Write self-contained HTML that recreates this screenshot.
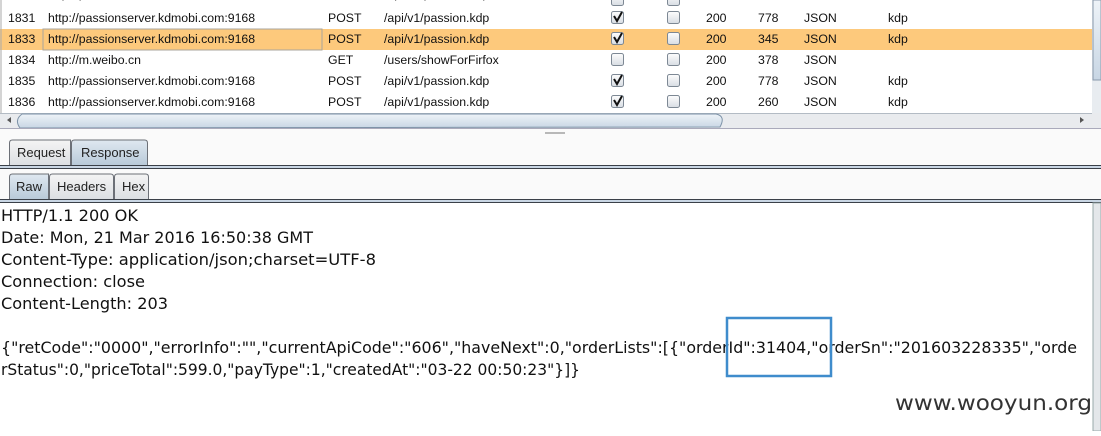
<!DOCTYPE html>
<html><head><meta charset="utf-8"><style>html,body{margin:0;padding:0;background:#fff;overflow:hidden}</style></head>
<body>
<svg width="1101" height="431" viewBox="0 0 1101 431" xmlns="http://www.w3.org/2000/svg" font-family="Liberation Sans, sans-serif">
<defs>
<linearGradient id="cb" x1="0" y1="0" x2="0" y2="1"><stop offset="0" stop-color="#fdfdfd"/><stop offset="1" stop-color="#d8dde3"/></linearGradient>
<linearGradient id="tab" x1="0" y1="0" x2="0" y2="1"><stop offset="0" stop-color="#f4f4f4"/><stop offset="1" stop-color="#dcdfe3"/></linearGradient>
<linearGradient id="tabs" x1="0" y1="0" x2="0" y2="1"><stop offset="0" stop-color="#dfe8f0"/><stop offset="1" stop-color="#b9cad9"/></linearGradient>
<linearGradient id="sb" x1="0" y1="0" x2="0" y2="1"><stop offset="0" stop-color="#eef3f8"/><stop offset="1" stop-color="#c8d6e4"/></linearGradient>
</defs>
<rect width="1101" height="431" fill="#fff"/>
<rect x="0" y="0" width="1092" height="113" fill="#fff"/>
<rect x="0" y="29" width="1092" height="21" fill="#fdc97c"/>
<rect x="43" y="29" width="279" height="21" fill="none" stroke="#a9a59c"/>
<line x1="1" y1="0" x2="1" y2="113" stroke="#aaa"/>
<g font-size="12.3" fill="#111">
<text x="8" y="-2">1830</text><text x="48" y="-2">http://passionserver.kdmobi.com:9168</text><text x="328" y="-2">POST</text><text x="384" y="-2">/api/v1/passion.kdp</text>
<text x="8" y="22">1831</text><text x="48" y="22">http://passionserver.kdmobi.com:9168</text><text x="328" y="22">POST</text><text x="384" y="22">/api/v1/passion.kdp</text><text x="706" y="22">200</text><text x="758" y="22">778</text><text x="804" y="22">JSON</text><text x="888" y="22">kdp</text>
<text x="8" y="43">1833</text><text x="48" y="43">http://passionserver.kdmobi.com:9168</text><text x="328" y="43">POST</text><text x="384" y="43">/api/v1/passion.kdp</text><text x="706" y="43">200</text><text x="758" y="43">345</text><text x="804" y="43">JSON</text><text x="888" y="43">kdp</text>
<text x="8" y="64">1834</text><text x="48" y="64">http://m.weibo.cn</text><text x="328" y="64">GET</text><text x="384" y="64">/users/showForFirfox</text><text x="706" y="64">200</text><text x="758" y="64">378</text><text x="804" y="64">JSON</text>
<text x="8" y="85">1835</text><text x="48" y="85">http://passionserver.kdmobi.com:9168</text><text x="328" y="85">POST</text><text x="384" y="85">/api/v1/passion.kdp</text><text x="706" y="85">200</text><text x="758" y="85">778</text><text x="804" y="85">JSON</text><text x="888" y="85">kdp</text>
<text x="8" y="106">1836</text><text x="48" y="106">http://passionserver.kdmobi.com:9168</text><text x="328" y="106">POST</text><text x="384" y="106">/api/v1/passion.kdp</text><text x="706" y="106">200</text><text x="758" y="106">260</text><text x="804" y="106">JSON</text><text x="888" y="106">kdp</text>
</g>
<g stroke="#7d8894" fill="url(#cb)">
<rect x="611.5" y="-6.5" width="12" height="12" rx="2"/><rect x="667.5" y="-6.5" width="12" height="12" rx="2"/>
<rect x="611.5" y="11.5" width="12" height="12" rx="2"/><rect x="667.5" y="11.5" width="12" height="12" rx="2"/>
<rect x="611.5" y="32.5" width="12" height="12" rx="2"/><rect x="667.5" y="32.5" width="12" height="12" rx="2"/>
<rect x="611.5" y="53.5" width="12" height="12" rx="2"/><rect x="667.5" y="53.5" width="12" height="12" rx="2"/>
<rect x="611.5" y="74.5" width="12" height="12" rx="2"/><rect x="667.5" y="74.5" width="12" height="12" rx="2"/>
<rect x="611.5" y="95.5" width="12" height="12" rx="2"/><rect x="667.5" y="95.5" width="12" height="12" rx="2"/>
</g>
<g stroke="#111" stroke-width="2" fill="none">
<path d="M614 16l3 5 5-9"/><path d="M614 37l3 5 5-9"/><path d="M614 79l3 5 5-9"/><path d="M614 100l3 5 5-9"/>
</g>
<rect x="1092" y="0" width="9" height="128" fill="#e8ecf0"/>
<rect x="1093" y="0" width="8" height="80" fill="url(#sb)" stroke="#8a9aab"/>
<rect x="0" y="113" width="1101" height="16" fill="#e9ebee"/>
<line x1="0" y1="113.5" x2="1092" y2="113.5" stroke="#b3bbc4"/>
<path d="M20 128 Q14 120 22 114 L716 114 Q726 116 720 127 Z" fill="url(#sb)" stroke="#7e93a8"/>
<path d="M11 117 l-4 3 4 3z" fill="#555"/><path d="M1080 117 l4 3 -4 3z" fill="#555"/>
<line x1="0" y1="128.5" x2="1101" y2="128.5" stroke="#aab"/>
<rect x="0" y="129" width="1101" height="38" fill="#fafafa"/>
<rect x="545" y="132" width="20" height="2" fill="#b8b8b8"/>
<path d="M9.5 165V143q0-3 3-3h58v25" fill="url(#tab)" stroke="#6c7077"/>
<path d="M71.5 165V143q0-3 3-3h70q3 0 3 3v22" fill="url(#tabs)" stroke="#6c7077"/>
<g font-size="13" fill="#222"><text x="17" y="157">Request</text><text x="81" y="157">Response</text></g>
<rect x="0" y="165" width="1101" height="1" fill="#3a4048"/><rect x="0" y="166" width="1101" height="2" fill="#c9d6e4"/><rect x="0" y="168" width="1101" height="1" fill="#3a4048"/>
<rect x="0" y="169" width="1101" height="30" fill="#fafafa"/>
<path d="M9.5 199V177q0-3 3-3h36v25" fill="url(#tabs)" stroke="#6c7077"/>
<path d="M49.5 199V177q0-3 3-3h58q3 0 3 3v22" fill="url(#tab)" stroke="#6c7077"/>
<path d="M114.5 199V177q0-3 3-3h28q3 0 3 3v22" fill="url(#tab)" stroke="#6c7077"/>
<g font-size="13" fill="#222"><text x="16" y="191">Raw</text><text x="57" y="191">Headers</text><text x="122" y="191">Hex</text></g>
<rect x="0" y="199" width="1101" height="1" fill="#3a4048"/><rect x="0" y="200" width="1101" height="2" fill="#c9d6e4"/><rect x="0" y="202" width="1101" height="1" fill="#3a4048"/>
<rect x="1093" y="203" width="8" height="228" fill="#e4e7ea" stroke="#9aa"/>
<g font-family="DejaVu Sans, sans-serif" font-size="16" fill="#111">
<text x="1" y="221" textLength="137" lengthAdjust="spacingAndGlyphs">HTTP/1.1 200 OK</text>
<text x="1" y="243" textLength="312" lengthAdjust="spacingAndGlyphs">Date: Mon, 21 Mar 2016 16:50:38 GMT</text>
<text x="1" y="265" textLength="375" lengthAdjust="spacingAndGlyphs">Content-Type: application/json;charset=UTF-8</text>
<text x="1" y="287" textLength="144" lengthAdjust="spacingAndGlyphs">Connection: close</text>
<text x="1" y="309" textLength="167" lengthAdjust="spacingAndGlyphs">Content-Length: 203</text>
<text x="1" y="353" textLength="1076" lengthAdjust="spacingAndGlyphs">{"retCode":"0000","errorInfo":"","currentApiCode":"606","haveNext":0,"orderLists":[{"orderId":31404,"orderSn":"201603228335","orde</text>
<text x="1" y="375" textLength="579" lengthAdjust="spacingAndGlyphs">rStatus":0,"priceTotal":599.0,"payType":1,"createdAt":"03-22 00:50:23"}]}</text>
</g>
<rect x="727" y="318" width="104" height="58" fill="none" stroke="#3f8ccc" stroke-width="2.5"/>
<text x="895" y="410" font-family="DejaVu Sans, sans-serif" font-size="21" fill="#333" textLength="197" lengthAdjust="spacingAndGlyphs">www.wooyun.org</text>
</svg>
</body></html>
